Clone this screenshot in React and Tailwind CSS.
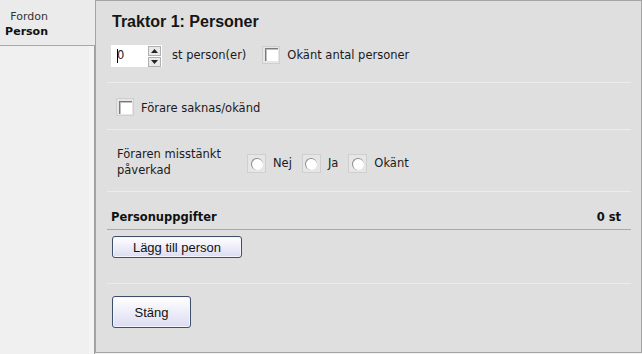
import React from "react";

const Checkbox = () => (
  <span className="inline-flex h-[18px] w-[18px] items-center justify-center border border-[#cfcfcf] bg-[#e6e6e6]">
    <span className="h-[13px] w-[13px] border-l border-t border-[#7a7a7a] bg-white shadow-[inset_1px_1px_0_#c0c0c0]" />
  </span>
);

const Radio = ({ label }) => (
  <label className="flex items-center gap-[7px]">
    <span className="inline-flex h-[19px] w-[19px] items-center justify-center border border-[#cfcfcf] bg-[#e6e6e6]">
      <span className="h-[12px] w-[12px] rounded-full border-l border-t border-[#8a8a8a] bg-white" />
    </span>
    <span>{label}</span>
  </label>
);

const Spinner = () => (
  <div className="flex h-[22px] w-[51px] items-center justify-between bg-white pl-[6px] pr-[1px]">
    <span className="relative leading-none">
      <span className="absolute left-0 top-[-1px] h-[14px] w-px bg-black" />
      0
    </span>
    <div className="flex flex-col gap-px">
      <span className="flex h-[10px] w-[13px] items-center justify-center border border-[#b0b0b0] bg-[#e8e8e8]">
        <svg width="7" height="4" viewBox="0 0 7 4"><path d="M0 4 L3.5 0 L7 4 Z" fill="#222" /></svg>
      </span>
      <span className="flex h-[10px] w-[13px] items-center justify-center border border-[#b0b0b0] bg-[#e8e8e8]">
        <svg width="7" height="4" viewBox="0 0 7 4"><path d="M0 0 L3.5 4 L7 0 Z" fill="#222" /></svg>
      </span>
    </div>
  </div>
);

const arial = { fontFamily: '"Liberation Sans", Arial, sans-serif' };

const Button = ({ children, className }) => (
  <button
    className={
      "rounded-[3px] border border-[#3d4f6b] bg-gradient-to-b from-white to-[#dcdcf2] text-[13px] text-[#111] shadow-[inset_0_0_0_1px_#f4f4ff] " +
      className
    }
    style={arial}
  >
    {children}
  </button>
);

export default function App() {
  return (
    <div
      className="flex h-[354px] w-[642px] bg-[#f0f0f0] text-[11.5px] text-[#1a1a22]"
      style={{ fontFamily: '"DejaVu Sans", Tahoma, sans-serif' }}
    >
      <aside className="w-[95px] shrink-0 text-[11px]">
        <div className="h-[46px] border-b border-[#a8a8a8] bg-[#ebebeb] pt-[9px]">
          <div className="w-[48px] text-right leading-[15px]">
            <div className="text-[#333]">Fordon</div>
            <div className="font-bold text-[#111]">Person</div>
          </div>
        </div>
        <div className="h-[308px] border-r border-[#a0a0a0] bg-[#f0f0f0] shadow-[inset_-5px_0_0_#f4f4f4]" />
      </aside>

      <main className="mb-[1px] flex-1 border-x border-b border-t border-[#a4a4a4] bg-[#dfdfdf] pl-[11px] pr-[10px]">
        <h1 className="pl-[5px] pt-[11px] text-[16px] font-bold leading-[20px] text-[#151515]" style={arial}>
          Traktor 1: Personer
        </h1>

        <div className="flex items-center pl-[4px] pt-[13px] pb-[15px]">
          <Spinner />
          <span className="ml-[10px]">st person(er)</span>
          <span className="ml-[16px]">
            <Checkbox />
          </span>
          <span className="ml-[7px]">Okänt antal personer</span>
        </div>

        <div className="border-t border-[#ececec]" />

        <div className="flex h-[46px] items-center gap-[7px] pl-[9px] pt-[2px]">
          <Checkbox />
          <span className="pt-[2px] leading-[16px]">Förare saknas/okänd</span>
        </div>

        <div className="border-t border-[#ececec]" />

        <div className="flex items-center pl-[10px] pt-[16px] pb-[13px]">
          <div className="w-[130px] leading-[16px]">
            Föraren misstänkt
            <br />
            påverkad
          </div>
          <div className="flex items-center gap-[10px] pt-[3px]">
            <Radio label="Nej" />
            <Radio label="Ja" />
            <Radio label="Okänt" />
          </div>
        </div>

        <div className="border-t border-[#ececec]" />

        <div className="flex items-center justify-between pl-[4px] pr-[10px] pt-[17px] pb-[3px] font-bold text-[#111]">
          <span>Personuppgifter</span>
          <span>0 st</span>
        </div>
        <div className="border-t border-[#a8a8a8]" />

        <div className="pl-[5px] pt-[6px] pb-[25px]">
          <Button className="h-[22px] w-[130px]">Lägg till person</Button>
        </div>

        <div className="border-t border-[#ececec]" />

        <div className="pl-[5px] pt-[12px]">
          <Button className="h-[32px] w-[79px]">Stäng</Button>
        </div>
      </main>
    </div>
  );
}
